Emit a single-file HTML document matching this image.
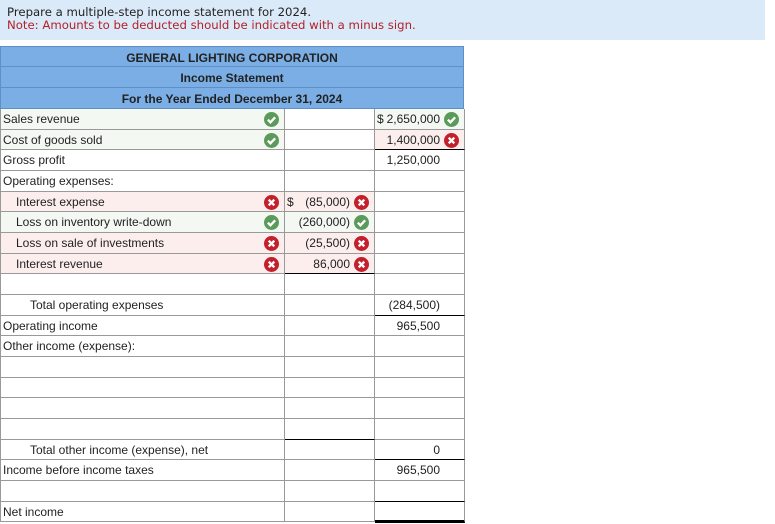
<!DOCTYPE html>
<html><head><meta charset="utf-8">
<style>
body{margin:0;width:775px;height:524px;position:relative;background:#fff;font-family:"Liberation Sans",Arial,sans-serif;font-size:12px;color:#222;overflow:hidden}
.ban{position:absolute;left:0;top:0;width:765px;height:40px;background:#dbeaf8;font-family:"DejaVu Sans",Verdana,sans-serif;font-size:11.7px;line-height:13px}
.ban div{position:absolute;left:7px}
.h{position:absolute;left:0;width:464px;background:#7aaee4;border:1px solid #5f8fc4;border-top:none;text-align:center;font-weight:bold;color:#222;box-sizing:border-box;padding-top:1px}
.c{position:absolute;box-sizing:border-box;border-bottom:1px solid #999;border-right:1px solid #999;line-height:21px;white-space:nowrap}
.l{left:0;width:285px;padding-left:2px;border-left:1px solid #999}
.m{left:285px;width:90px;text-align:right;padding-right:24px}
.r{left:375px;width:90px;text-align:right;padding-right:24px}
.g{background:#f3f8f3}.p{background:#fdeeee}
.bb{border-bottom:1px solid #000}
.i{position:absolute;top:3px;width:15px;height:15px}
</style></head><body>
<div class="ban"><div style="top:6px">Prepare a multiple-step income statement for 2024.</div><div style="top:19px;color:#b3202a">Note: Amounts to be deducted should be indicated with a minus sign.</div></div>
<div class="h" style="top:46px;height:21px;line-height:21px;border-top:1px solid #5f8fc4">GENERAL LIGHTING CORPORATION</div>
<div class="h" style="top:67px;height:21px;line-height:21px">Income Statement</div>
<div class="h" style="top:88px;height:21px;line-height:21px">For the Year Ended December 31, 2024</div>

<svg width="0" height="0" style="position:absolute"><defs>
<symbol id="ok" viewBox="0 0 14 14"><circle cx="7" cy="7" r="7" fill="#5b9a5b"/><path d="M3.6 7.2l2.4 2.4 4.4-4.6" stroke="#fff" stroke-width="2.2" fill="none"/></symbol>
<symbol id="no" viewBox="0 0 14 14"><circle cx="7" cy="7" r="7" fill="#c4202c"/><path d="M4.4 4.4l5.2 5.2M9.6 4.4l-5.2 5.2" stroke="#fff" stroke-width="2.2"/></symbol>
</defs></svg>

<div class="c l g" style="top:109px;height:21px">Sales revenue<svg class="i" style="left:263px"><use href="#ok"/></svg></div>
<div class="c m" style="top:109px;height:21px"></div>
<div class="c r g" style="top:109px;height:21px"><span style="position:absolute;left:2px">$</span>2,650,000<svg class="i" style="left:69px"><use href="#ok"/></svg></div>
<div class="c l g" style="top:130px;height:20px">Cost of goods sold<svg class="i" style="left:263px"><use href="#ok"/></svg></div>
<div class="c m" style="top:130px;height:20px"></div>
<div class="c r p bb" style="top:130px;height:20px">1,400,000<svg class="i" style="left:69px"><use href="#no"/></svg></div>
<div class="c l" style="top:150px;height:21px">Gross profit</div>
<div class="c m" style="top:150px;height:21px"></div>
<div class="c r" style="top:150px;height:21px">1,250,000</div>
<div class="c l" style="top:171px;height:21px">Operating expenses:</div>
<div class="c m" style="top:171px;height:21px"></div>
<div class="c r" style="top:171px;height:21px"></div>
<div class="c l p" style="top:192px;height:20px;padding-left:15px">Interest expense<svg class="i" style="left:263px"><use href="#no"/></svg></div>
<div class="c m p" style="top:192px;height:20px"><span style="position:absolute;left:2px">$</span>(85,000)<svg class="i" style="left:69px"><use href="#no"/></svg></div>
<div class="c r" style="top:192px;height:20px"></div>
<div class="c l g" style="top:212px;height:21px;padding-left:15px">Loss on inventory write-down<svg class="i" style="left:263px"><use href="#ok"/></svg></div>
<div class="c m g" style="top:212px;height:21px">(260,000)<svg class="i" style="left:69px"><use href="#ok"/></svg></div>
<div class="c r" style="top:212px;height:21px"></div>
<div class="c l p" style="top:233px;height:21px;padding-left:15px">Loss on sale of investments<svg class="i" style="left:263px"><use href="#no"/></svg></div>
<div class="c m p" style="top:233px;height:21px">(25,500)<svg class="i" style="left:69px"><use href="#no"/></svg></div>
<div class="c r" style="top:233px;height:21px"></div>
<div class="c l p" style="top:254px;height:20px;padding-left:15px">Interest revenue<svg class="i" style="left:263px"><use href="#no"/></svg></div>
<div class="c m p bb" style="top:254px;height:20px">86,000<svg class="i" style="left:69px"><use href="#no"/></svg></div>
<div class="c r" style="top:254px;height:20px"></div>
<div class="c l" style="top:274px;height:21px"></div>
<div class="c m" style="top:274px;height:21px"></div>
<div class="c r" style="top:274px;height:21px"></div>
<div class="c l" style="top:295px;height:21px;padding-left:29px">Total operating expenses</div>
<div class="c m" style="top:295px;height:21px"></div>
<div class="c r bb" style="top:295px;height:21px">(284,500)</div>
<div class="c l" style="top:316px;height:20px">Operating income</div>
<div class="c m" style="top:316px;height:20px"></div>
<div class="c r" style="top:316px;height:20px">965,500</div>
<div class="c l" style="top:336px;height:21px">Other income (expense):</div>
<div class="c m" style="top:336px;height:21px"></div>
<div class="c r" style="top:336px;height:21px"></div>
<div class="c l" style="top:357px;height:21px"></div><div class="c m" style="top:357px;height:21px"></div><div class="c r" style="top:357px;height:21px"></div>
<div class="c l" style="top:378px;height:20px"></div><div class="c m" style="top:378px;height:20px"></div><div class="c r" style="top:378px;height:20px"></div>
<div class="c l" style="top:398px;height:21px"></div><div class="c m" style="top:398px;height:21px"></div><div class="c r" style="top:398px;height:21px"></div>
<div class="c l" style="top:419px;height:21px"></div><div class="c m bb" style="top:419px;height:21px"></div><div class="c r" style="top:419px;height:21px"></div>
<div class="c l" style="top:440px;height:20px;padding-left:29px">Total other income (expense), net</div>
<div class="c m" style="top:440px;height:20px"></div>
<div class="c r bb" style="top:440px;height:20px">0</div>
<div class="c l" style="top:460px;height:21px">Income before income taxes</div>
<div class="c m" style="top:460px;height:21px"></div>
<div class="c r" style="top:460px;height:21px">965,500</div>
<div class="c l" style="top:481px;height:21px"></div>
<div class="c m" style="top:481px;height:21px"></div>
<div class="c r bb" style="top:481px;height:21px"></div>
<div class="c l" style="top:502px;height:20px">Net income</div>
<div class="c m" style="top:502px;height:20px"></div>
<div class="c r" style="top:502px;height:21px;border-bottom:3px solid #000"></div>
</body></html>
